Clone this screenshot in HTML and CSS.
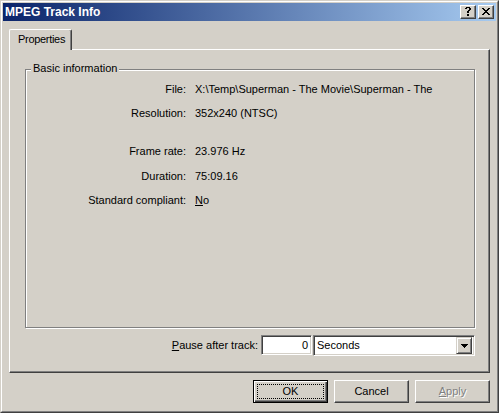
FILE: index.html
```html
<!DOCTYPE html>
<html>
<head>
<meta charset="utf-8">
<title>MPEG Track Info</title>
<link rel="stylesheet" href="styles.css">
</head>
<body>
<div class="window">
  <div class="frame">
    <div class="titlebar">
      <span class="title">MPEG Track Info</span>
      <div class="caption-btns">
        <div class="cap-btn"><svg width="6" height="9" viewBox="0 0 6 9" shape-rendering="crispEdges"><path d="M1 0h4v1H1z M0 1h2v1H0z M4 1h2v1H4z M4 2h2v1H4z M3 3h2v1H3z M2 4h2v2H2z M2 7h2v2H2z" fill="#000"/></svg></div>
        <div class="cap-btn"><svg width="8" height="7" viewBox="0 0 8 7" shape-rendering="crispEdges"><path d="M0 0h2v1H0z M6 0h2v1H6z M1 1h2v1H1z M5 1h2v1H5z M2 2h4v1H2z M3 3h2v1H3z M2 4h4v1H2z M1 5h2v1H1z M5 5h2v1H5z M0 6h2v1H0z M6 6h2v1H6z" fill="#000"/></svg></div>
      </div>
    </div>
    <div class="client">
      <div class="tabs"><div class="tab">Properties</div></div>
      <div class="panel">
        <div class="group">
          <span class="legend">Basic information</span>
          <div class="rows">
            <div class="row"><span class="lbl">File:</span><span class="val">X:\Temp\Superman - The Movie\Superman - The</span></div>
            <div class="row"><span class="lbl">Resolution:</span><span class="val">352x240 (NTSC)</span></div>
            <div class="row spaced"><span class="lbl">Frame rate:</span><span class="val">23.976 Hz</span></div>
            <div class="row nudge"><span class="lbl">Duration:</span><span class="val">75:09.16</span></div>
            <div class="row"><span class="lbl">Standard compliant:</span><span class="val"><u>N</u>o</span></div>
          </div>
        </div>
        <div class="pause-row">
          <span class="pause-lbl"><u>P</u>ause after track:</span>
          <div class="edit">0</div>
          <div class="combo">
            <span class="combo-text">Seconds</span>
            <div class="drop"><svg width="7" height="4" viewBox="0 0 7 4" shape-rendering="crispEdges"><path d="M0 0h7v1H0z M1 1h5v1H1z M2 2h3v1H2z M3 3h1v1H3z" fill="#000"/></svg></div>
          </div>
        </div>
      </div>
      <div class="buttons">
        <div class="btn default"><span class="focus">OK</span></div>
        <div class="btn">Cancel</div>
        <div class="btn disabled"><u>A</u>pply</div>
      </div>
    </div>
  </div>
</div>
</body>
</html>
```

FILE: styles.css
```css
* { box-sizing: border-box; }
html, body { margin: 0; padding: 0; }
body {
  background: #d4d0c8;
  font-family: "Liberation Sans", Arial, sans-serif;
  font-size: 11px;
  line-height: 13px;
  color: #000;
}
.window {
  width: 499px;
  height: 413px;
  border: 1px solid;
  border-color: #d4d0c8 #404040 #404040 #d4d0c8;
  background: #d4d0c8;
}
.frame {
  height: 100%;
  border: 1px solid;
  border-color: #fff #808080 #808080 #fff;
  padding: 1px;
  display: flex;
  flex-direction: column;
}
.titlebar {
  height: 18px;
  flex: none;
  display: flex;
  align-items: center;
  padding-left: 2px;
  background: linear-gradient(to right, #0a246a, #a6caf0);
}
.title {
  flex: 1;
  color: #fff;
  font-weight: bold;
  font-size: 12px;
  line-height: 14px;
}
.caption-btns {
  display: flex;
  gap: 2px;
  margin-right: 2px;
}
.cap-btn {
  width: 16px;
  height: 14px;
  border: 1px solid;
  border-color: #fff #404040 #404040 #fff;
  box-shadow: inset -1px -1px #808080;
  background: #d4d0c8;
  display: flex;
  align-items: center;
  justify-content: center;
  padding: 0 1px 1px 0;
}
.cap-btn svg { display: block; }
.client {
  flex: 1;
  padding: 8px 6px 0 6px;
}
.tabs {
  display: flex;
  height: 20px;
}
.tab {
  position: relative;
  z-index: 1;
  width: 63px;
  height: 21px;
  margin-bottom: -1px;
  background: #d4d0c8;
  border-top: 1px solid #fff;
  border-left: 1px solid #fff;
  border-right: 1px solid #404040;
  border-radius: 2px 2px 0 0;
  box-shadow: inset -1px 0 #808080;
  padding: 3px 0 0 8px;
  letter-spacing: -0.3px;
}
.panel {
  height: 324px;
  border: 1px solid;
  border-color: #fff #404040 #404040 #fff;
  box-shadow: inset -1px -1px #808080;
  padding: 19px 0 0 15px;
}
.group {
  position: relative;
  width: 450px;
  height: 259px;
  border: 1px solid #808080;
  box-shadow: inset 1px 1px #fff, 1px 1px #fff;
  padding-top: 13px;
}
.legend {
  position: absolute;
  left: 5px;
  top: -8px;
  padding: 0 2px;
  background: #d4d0c8;
}
.rows {
  display: flex;
  flex-direction: column;
  gap: 11px;
}
.row {
  display: grid;
  grid-template-columns: 160px 1fr;
  column-gap: 9px;
  white-space: nowrap;
}
.row.spaced { margin-top: 14px; }
.row.nudge { margin-top: 1px; }
.lbl { text-align: right; }
.pause-row {
  width: 450px;
  margin-top: 7px;
  height: 21px;
  display: flex;
  justify-content: flex-end;
  align-items: flex-start;
}
.pause-lbl { margin-right: 3px; margin-top: 4px; }
.edit, .combo {
  background: #fff;
  border: 1px solid;
  border-color: #808080 #fff #fff #808080;
  box-shadow: inset 1px 1px #404040, inset -1px -1px #d4d0c8;
}
.edit {
  width: 51px;
  height: 20px;
  text-align: right;
  padding: 3px 3px 0 0;
}
.combo {
  width: 162px;
  height: 21px;
  margin-left: 1px;
  display: flex;
  align-items: center;
  padding: 2px;
}
.combo-text {
  flex: 1;
  padding-left: 1px;
}
.drop {
  width: 16px;
  height: 17px;
  background: #d4d0c8;
  border: 1px solid;
  border-color: #d4d0c8 #404040 #404040 #d4d0c8;
  box-shadow: inset 1px 1px #fff, inset -1px -1px #808080;
  display: flex;
  align-items: center;
  justify-content: center;
}
.drop svg { display: block; }
.buttons {
  margin-top: 7px;
  display: flex;
  justify-content: flex-end;
  gap: 6px;
}
.btn {
  position: relative;
  width: 75px;
  height: 23px;
  border: 1px solid;
  border-color: #fff #404040 #404040 #fff;
  box-shadow: inset -1px -1px #808080;
  display: flex;
  align-items: center;
  justify-content: center;
  padding-bottom: 1px;
}
.btn.default {
  border: 1px solid #000;
  box-shadow: inset 1px 1px #fff, inset -1px -1px #404040, inset -2px -2px #808080;
}
.btn.default::after {
  content: "";
  position: absolute;
  left: 3px;
  top: 3px;
  right: 3px;
  bottom: 3px;
  border: 1px dotted #000;
}
.btn.disabled {
  color: #808080;
  text-shadow: 1px 1px #fff;
}
```
